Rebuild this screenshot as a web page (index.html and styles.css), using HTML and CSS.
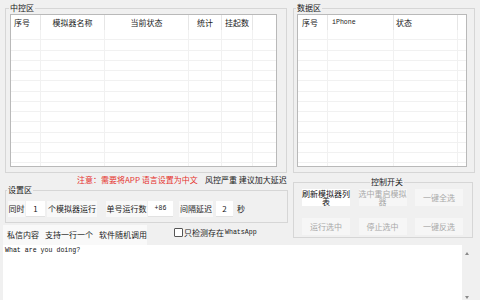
FILE: index.html
```html
<!DOCTYPE html>
<html lang="zh">
<head>
<meta charset="utf-8">
<title>控制台</title>
<link rel="stylesheet" href="styles.css">
</head>
<body>
<div class="top">
  <fieldset class="grp grp-main">
    <legend>中控区</legend>
    <div class="lv lv-main">
      <div class="lv-head">
        <span class="m1 first">序号</span>
        <span class="m2">模拟器名称</span>
        <span class="m3">当前状态</span>
        <span class="m4">统计</span>
        <span class="m5">挂起数</span>
        <span class="rest"></span>
      </div>
      <div class="lv-body">
        <span class="m1"></span><span class="m2"></span><span class="m3"></span><span class="m4"></span><span class="m5"></span><span class="rest"></span>
      </div>
    </div>
  </fieldset>
  <fieldset class="grp grp-data">
    <legend>数据区</legend>
    <div class="lv lv-data">
      <div class="lv-head">
        <span class="d1">序号</span>
        <span class="d2 mono">iPhone</span>
        <span class="d3">状态</span>
        <span class="rest"></span>
      </div>
      <div class="lv-body">
        <span class="d1"></span><span class="d2"></span><span class="d3"></span><span class="rest"></span>
      </div>
    </div>
  </fieldset>
</div>

<div class="mid">
  <div class="col-left">
    <div class="notice">
      <span class="red">注意：需要将APP 语言设置为中文</span>
      <span class="warn">风控严重 建议加大延迟</span>
    </div>
    <fieldset class="grp grp-set">
      <legend>设置区</legend>
      <div class="set-row">
        <span class="lab lab-a">同时</span>
        <span class="inp inp-a">1</span>
        <span class="lab lab-b">个模拟器运行</span>
        <span class="lab lab-c">单号运行数</span>
        <span class="inp inp-b mono">+86</span>
        <span class="lab lab-d">间隔延迟</span>
        <span class="inp inp-c">2</span>
        <span class="unit">秒</span>
      </div>
    </fieldset>
    <div class="msg-row">
      <span class="msg-label"><span>私信内容</span><span>支持一行一个</span><span>软件随机调用</span></span>
      <label class="chk"><span class="box"></span>只检测存在<span class="mono">WhatsApp</span></label>
    </div>
  </div>
  <fieldset class="grp grp-ctl">
    <legend>控制开关</legend>
    <div class="btns">
      <span class="btn on">刷新模拟器列表</span>
      <span class="btn">选中重启模拟器</span>
      <span class="btn">一键全选</span>
      <span class="btn">运行选中</span>
      <span class="btn">停止选中</span>
      <span class="btn">一键反选</span>
    </div>
  </fieldset>
</div>

<div class="editor">
  <div class="text">What are you doing?</div>
  <div class="sb"><span class="up"></span><span class="down"></span></div>
</div>
</body>
</html>
```

FILE: styles.css
```css
html, body {
  margin: 0;
  padding: 0;
}
body {
  width: 480px;
  height: 300px;
  overflow: hidden;
  background: #f0f0f0;
  color: #1a1a1a;
  font-family: "Noto Sans CJK SC", "Microsoft YaHei", sans-serif;
  font-size: 8px;
  line-height: 10px;
}
.mono {
  font-family: "Liberation Mono", "DejaVu Sans Mono", monospace;
  font-size: 6.6px;
}

/* group boxes */
fieldset.grp {
  border: 1px solid #d6d6d6;
  margin: 0;
  padding: 1px 0 5px 4px;
  min-width: 0;
  box-sizing: border-box;
  flex: none;
}
fieldset.grp legend {
  font-size: 8px;
  line-height: 10px;
  padding: 0 1px;
  margin-left: -1px;
}

.top {
  display: flex;
  padding-top: 3px;
}
fieldset.grp-main {
  margin-left: 5px;
  width: 282px;
}
fieldset.grp-data {
  margin-left: 6px;
  width: 182px;
  padding-left: 3px;
}

/* list views */
.lv {
  background: #fff;
  border: 1px solid #b9b9b9;
  height: 153px;
  box-sizing: border-box;
  display: flex;
  flex-direction: column;
}
.lv-main { width: 267px; }
.lv-data { width: 170px; }

.lv-head {
  display: flex;
  height: 15px;
  line-height: 15px;
  flex: none;
}
.lv-head > span {
  box-sizing: border-box;
  border-right: 1px solid #e6e6e6;
  text-align: center;
  white-space: nowrap;
  flex: none;
}
.lv-head > .rest,
.lv-body > .rest {
  flex: 1;
  border-right: none;
}
.lv-head > .first { text-align: left; padding-left: 3px; }

.lv-body {
  flex: 1;
  display: flex;
  background: repeating-linear-gradient(to bottom, transparent 0, transparent 9.25px, #f1f1f1 9.25px, #f1f1f1 10.25px);
}
.lv-body > span {
  box-sizing: border-box;
  border-right: 1px solid #f1f1f1;
  flex: none;
}

.m1 { width: 30px; }
.m2 { width: 64px; }
.m3 { width: 84px; }
.m4 { width: 33px; }
.m5 { width: 31px; }

.d1 { width: 30px; }
.d2 { width: 66px; }
.d3 { width: 64px; }
.lv-data .lv-head > span { text-align: left; padding-left: 4px; }
.lv-data .lv-head > .d3 { padding-left: 2px; }
.lv-data .lv-head > .mono { line-height: 15px; }

/* middle area */
.mid {
  display: flex;
  align-items: flex-start;
}
.col-left {
  width: 290px;
  flex: none;
}
.notice {
  margin-top: 2px;
  height: 10px;
  display: flex;
  white-space: nowrap;
}
.red {
  margin-left: 77px;
  width: 128px;
  color: #e5322d;
}
.warn {
  color: #1a1a1a;
}

fieldset.grp-set {
  margin-left: 5px;
  width: 283px;
  padding: 6px 0 5px 2px;
}
.set-row {
  display: flex;
  align-items: center;
  height: 16px;
  white-space: nowrap;
}
.lab {
  background: #f8f8f8;
  height: 16px;
  line-height: 16px;
  text-align: center;
  flex: none;
}
.inp {
  background: #fff;
  height: 16px;
  line-height: 16px;
  text-align: center;
  border-bottom: 1px solid #e2e2e2;
  box-sizing: border-box;
  flex: none;
}
.inp.mono { line-height: 16px; }
.lab-a { width: 17px; }
.inp-a { width: 19px; margin-left: 1px; }
.lab-b { width: 50px; margin-left: 2px; }
.lab-c { width: 41px; margin-left: 9px; }
.inp-b { width: 25px; margin-left: 1px; }
.lab-d { width: 34px; margin-left: 6px; }
.inp-c { width: 17px; margin-left: 3px; }
.unit { margin-left: 4px; }

.msg-row {
  margin-top: 2px;
  height: 20px;
  display: flex;
  white-space: nowrap;
}
.msg-label {
  margin-left: 3px;
  width: 144px;
  box-sizing: border-box;
  padding-left: 4px;
  background: #f9f9f9;
  line-height: 20px;
  display: flex;
  gap: 6px;
}
.chk {
  margin-left: 27px;
  margin-top: 3px;
  display: flex;
  align-items: center;
  height: 9px;
  gap: 1px;
}
.chk .box {
  width: 7px;
  height: 7px;
  border: 1px solid #555;
  background: #fff;
  border-radius: 1px;
}
.chk .mono { margin-top: 1px; }

fieldset.grp-ctl {
  margin: 4px 0 0 3px;
  width: 180px;
  padding: 2px 0 2px 8px;
}
fieldset.grp-ctl legend {
  margin: 0 auto;
}
.btns {
  display: grid;
  grid-template-columns: 48px 48px 48px;
  grid-template-rows: 17px 17px;
  column-gap: 8.5px;
  row-gap: 12px;
}
.btn {
  display: flex;
  align-items: center;
  justify-content: center;
  text-align: center;
  line-height: 7.5px;
  background: #f6f6f6;
  color: #a8a8a8;
}
.btn.on {
  background: #fff;
  color: #111;
}

/* editor */
.editor {
  display: flex;
  margin-left: 3px;
  height: 56px;
}
.text {
  width: 459px;
  box-sizing: border-box;
  background: #fff;
  font-family: "Liberation Mono", "DejaVu Sans Mono", monospace;
  font-size: 6.6px;
  line-height: 8px;
  padding: 2px 2px;
  color: #111;
}
.sb {
  width: 10px;
  background: #f0f0f0;
  display: flex;
  flex-direction: column;
  justify-content: space-between;
  align-items: center;
  padding: 7px 0 2px;
  box-sizing: border-box;
}
.up, .down {
  width: 0;
  height: 0;
  border-left: 2.5px solid transparent;
  border-right: 2.5px solid transparent;
}
.up { border-bottom: 3px solid #8a8a8a; }
.down { border-top: 3px solid #8a8a8a; }
```
